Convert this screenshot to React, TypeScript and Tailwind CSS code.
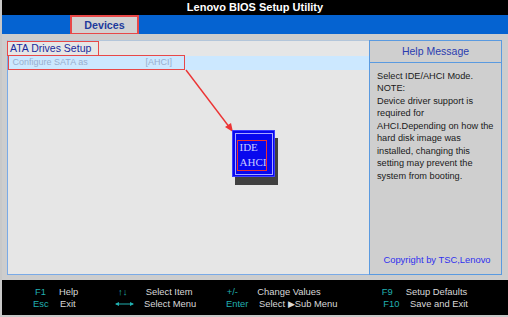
const sans = "font-['Liberation_Sans',Arial,sans-serif]";

const helpLines = [
  "Select IDE/AHCI Mode.",
  "NOTE:",
  "Device driver support is",
  "required for",
  "AHCI.Depending on how the",
  "hard disk image was",
  "installed, changing this",
  "setting may prevent the",
  "system from booting.",
];

const LongArrow = () => (
  <svg width="19" height="6" viewBox="0 0 19 6" className="inline-block">
    <line x1="1" y1="3" x2="18" y2="3" stroke="#20b0b0" strokeWidth="1" />
    <polygon points="0,3 4,1 4,5" fill="#20b0b0" />
    <polygon points="19,3 15,1 15,5" fill="#20b0b0" />
  </svg>
);

export default function App() {
  return (
    <div className={`w-[508px] h-[317px] bg-[#c8c8c8] pl-[2px] flex flex-col overflow-hidden ${sans}`}>
      {/* title */}
      <div className="h-[15px] bg-black flex items-center justify-center">
        <span className="text-white font-bold text-[11px] leading-none">Lenovo BIOS Setup Utility</span>
      </div>

      {/* menu bar */}
      <div className="h-[19px] bg-[#0563d1] flex items-start">
        <div className="ml-[68px] w-[69px] h-[20px] bg-[#d2d2d2] border-2 border-[#e84848] flex items-center justify-center">
          <span className="text-[#1e3a9c] font-bold text-[10.7px] leading-none">Devices</span>
        </div>
      </div>

      {/* body */}
      <div className="h-[246px] pt-[6px] pl-[5px] pr-[6px] bg-[#cdcdcd]">
        <div className="flex h-[235px]">
          {/* left panel */}
          <div className="relative w-[362px] h-full bg-[#e6e6e6] border border-[#7aaae6] border-t-[#b4c6da] border-r-0">
            <div className="h-[15px] flex">
              <div className="-ml-[1px] w-[92px] h-[15px] border-[1.5px] border-[#e84848] flex items-center pl-[2px]">
                <span className="text-[#1a2a9c] text-[10.5px] leading-none">ATA Drives Setup</span>
              </div>
            </div>
            <div className="h-[14px] bg-[#cce8ff] flex">
              <div className="w-[177px] h-[15px] -mt-[1px] border-[1.5px] border-[#e84848] flex items-center pl-[3.5px] text-[#98aece] text-[9px] leading-none">
                <span className="w-[133px]">Configure SATA as</span>
                <span>[AHCI]</span>
              </div>
            </div>

            {/* arrow */}
            <svg className="absolute left-0 top-0" width="360" height="234" viewBox="0 0 360 234">
              <line x1="178" y1="29" x2="222" y2="87" stroke="#ec3434" strokeWidth="1.4" />
              <polygon points="225,91 217,86 223,82" fill="#ec3434" />
            </svg>

            {/* popup */}
            <div className="absolute left-[227px] top-[97px] w-[43px] h-[47px] bg-[#404040]" />
            <div className="absolute left-[224px] top-[89px] w-[43px] h-[47px] bg-[#0808ee] border border-[#3c3cff] p-[1.5px]">
              <div className="w-full h-full border border-[#a8a8ff] pt-[6px] pl-[1px]">
                <div className="w-[30px] h-[31px] border border-[#f03030] flex flex-col justify-center gap-[2px] pl-[2px] font-['Liberation_Serif','Times_New_Roman',serif] text-[11px] leading-[13px] text-[#c8c8ff]">
                  <span>IDE</span>
                  <span>AHCI</span>
                </div>
              </div>
            </div>
          </div>

          {/* help panel */}
          <div className="w-[133px] h-full bg-[#cfcfcf] border border-[#5a9ae0] flex flex-col">
            <div className="h-[22px] border-b border-[#5a9ae0] flex items-center justify-center">
              <span className="text-[#2a3cb0] text-[10.5px] leading-none">Help Message</span>
            </div>
            <div className="pt-[7px] pl-[7px] text-[#1a1a1a] text-[9.2px] leading-[12.45px]">
              {helpLines.map((l) => (
                <div key={l} className="whitespace-nowrap">{l}</div>
              ))}
            </div>
            <div className="mt-auto mb-[10px] text-center text-[#3030ee] text-[9.4px] leading-none pl-[3px]">
              Copyright by TSC,Lenovo
            </div>
          </div>
        </div>
      </div>

      {/* footer */}
      <div className="h-[35px] bg-black flex flex-col justify-center gap-[2px] text-[9.4px] leading-[10px]">
        <div className="flex items-center pl-[33px]">
          <span className="w-[24px] text-[#20b0b0]">F1</span>
          <span className="w-[59px] text-[#d8d8d8]">Help</span>
          <span className="w-[27.7px] text-[#20b0b0]">↑↓</span>
          <span className="w-[81px] text-[#d8d8d8]">Select Item</span>
          <span className="w-[30.6px] text-[#20b0b0]">+/-</span>
          <span className="w-[124.4px] text-[#d8d8d8]">Change Values</span>
          <span className="w-[24px] text-[#20b0b0]">F9</span>
          <span className="text-[#d8d8d8]">Setup Defaults</span>
        </div>
        <div className="flex items-center pl-[31px]">
          <span className="w-[27px] text-[#20b0b0]">Esc</span>
          <span className="w-[55px] text-[#d8d8d8]">Exit</span>
          <span className="w-[29px] flex items-center"><LongArrow /></span>
          <span className="w-[82px] text-[#d8d8d8]">Select Menu</span>
          <span className="w-[33px] text-[#20b0b0]">Enter</span>
          <span className="w-[124.3px] text-[#d8d8d8]">Select ▶Sub Menu</span>
          <span className="w-[26.7px] text-[#20b0b0]">F10</span>
          <span className="text-[#d8d8d8]">Save and Exit</span>
        </div>
      </div>
    </div>
  );
}
